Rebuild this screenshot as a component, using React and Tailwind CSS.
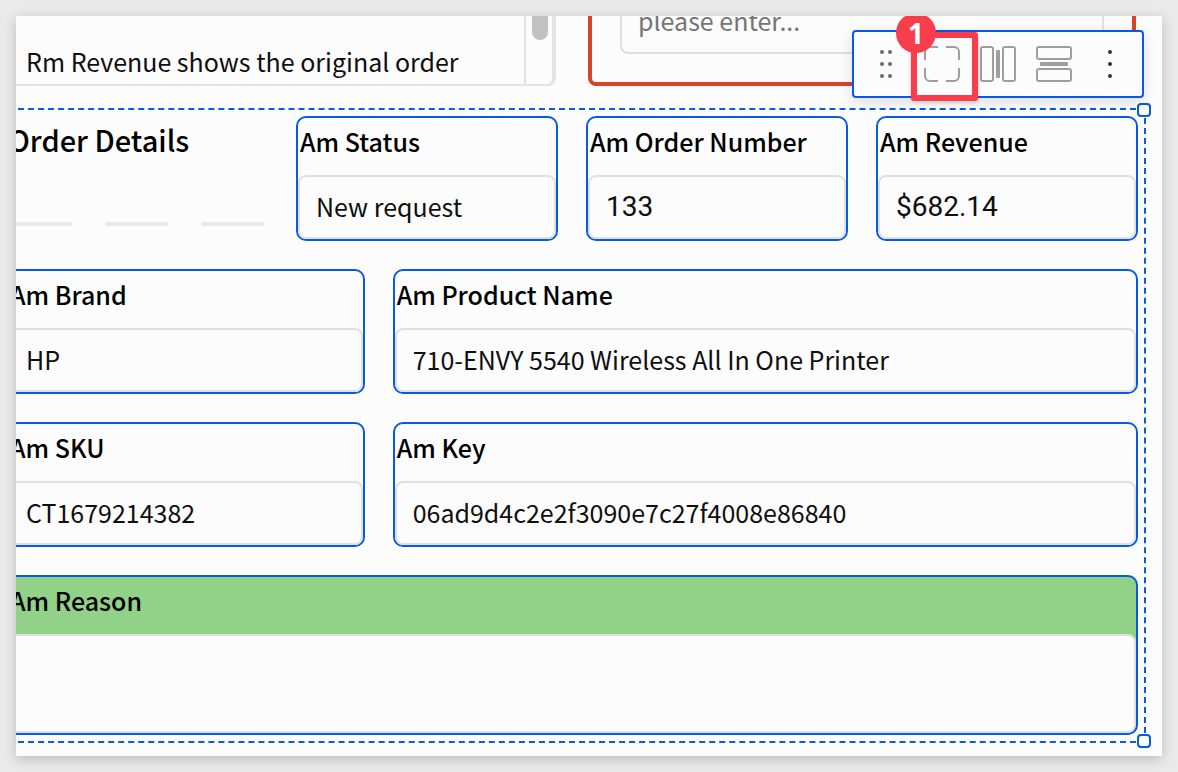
import { useId } from "react";

const sans = "font-['Noto_Sans_CJK_SC','Noto_Sans',sans-serif]";

function Field({ label, value, className, numeric = false }) {
  const id = useId();
  return (
    <div className={`flex min-w-0 flex-col rounded-[10px] border-2 border-[#055be5] ${className}`}>
      <label htmlFor={id} className="h-[57px] truncate pl-0.5 text-[25px] leading-[46px] font-medium text-black">
        {label}
      </label>
      <input
        id={id}
        defaultValue={value}
        className={`h-16 w-full min-w-0 rounded-lg border-2 border-[#e0e0e0] bg-[#fcfcfc] px-4 pb-0.5 outline-none ${
          numeric ? "font-[Roboto,sans-serif] text-[28px]" : "text-[25px]"
        }`}
      />
    </div>
  );
}

function ReasonField() {
  const id = useId();
  return (
    <div className="col-span-12 flex flex-col overflow-hidden rounded-[10px] border-2 border-[#055be5] bg-[#91d188]">
      <label htmlFor={id} className="h-[57px] pl-0.5 text-[25px] leading-[46px] font-medium text-black">
        Am Reason
      </label>
      <textarea
        id={id}
        className="block h-[99px] w-full resize-none rounded-lg border-2 border-[#e0e0e0] bg-[#fcfcfc] px-4 text-[25px] outline-none"
      />
    </div>
  );
}

function Handle({ className }) {
  return <span className={`absolute size-3.5 rounded border-2 border-[#055be5] bg-[#fcfcfc] ${className}`} />;
}

function ToolButton({ label, color, children }) {
  return (
    <button type="button" aria-label={label} className={`flex h-16 w-14 items-center justify-center ${color}`}>
      <svg viewBox="0 0 36 36" className="size-9" fill="none" stroke="currentColor" strokeWidth="2">
        {children}
      </svg>
    </button>
  );
}

function Toolbar() {
  return (
    <div
      role="toolbar"
      aria-label="Container tools"
      className="absolute top-3.5 right-[18px] flex rounded border-2 border-[#055be5] bg-[#fcfcfc] px-1 shadow-[0_4px_14px_rgba(0,0,0,0.13)]"
    >
      <ToolButton label="Move" color="text-[#6b6b6b]">
        <g fill="currentColor" stroke="none">
          <circle cx="14" cy="6" r="2" />
          <circle cx="22" cy="6" r="2" />
          <circle cx="14" cy="18" r="2" />
          <circle cx="22" cy="18" r="2" />
          <circle cx="14" cy="30" r="2" />
          <circle cx="22" cy="30" r="2" />
        </g>
      </ToolButton>
      <ToolButton label="Expand" color="text-[#9e9e9e]">
        <path d="M1 14V6a5 5 0 0 1 5-5h8M22 1h8a5 5 0 0 1 5 5v8M35 22v8a5 5 0 0 1-5 5h-8M14 35H6a5 5 0 0 1-5-5v-8" />
      </ToolButton>
      <ToolButton label="Distribute columns" color="text-[#9e9e9e]">
        <rect x="1" y="1" width="12" height="34" rx="2" />
        <rect x="16" y="4" width="4" height="28" rx="1" fill="currentColor" stroke="none" />
        <rect x="23" y="1" width="12" height="34" rx="2" />
      </ToolButton>
      <ToolButton label="Distribute rows" color="text-[#9e9e9e]">
        <rect x="1" y="1" width="34" height="12" rx="2" />
        <rect x="4" y="16" width="28" height="4" rx="1" fill="currentColor" stroke="none" />
        <rect x="1" y="23" width="34" height="12" rx="2" />
      </ToolButton>
      <ToolButton label="More" color="text-[#333333]">
        <g fill="currentColor" stroke="none">
          <circle cx="18" cy="6" r="2" />
          <circle cx="18" cy="18" r="2" />
          <circle cx="18" cy="30" r="2" />
        </g>
      </ToolButton>
      <span className="pointer-events-none absolute top-0 left-[57px] h-[69px] w-[67px] rounded-[3px] border-[6px] border-[#f93d4b] shadow-[0_1px_4px_rgba(0,0,0,0.2)]" />
      <span className="absolute -top-[19px] left-[42px] flex size-10 items-center justify-center rounded-full bg-[#f93d4b] font-['Open_Sans',sans-serif] text-[28px] leading-none font-bold text-white">
        1
      </span>
    </div>
  );
}

export default function App() {
  return (
    <div className={`min-h-screen bg-[#eaeaea] p-4 text-[#0f0f0f] ${sans}`}>
      <main className="relative overflow-hidden bg-[#fcfcfc] pb-[13px] shadow-[0_3px_12px_rgba(0,0,0,0.2)]">
        <div className="mr-6 -ml-2.5 grid h-[70px] grid-cols-2 gap-8">
          <div className="flex overflow-hidden rounded-b-lg border-r-4 border-b-2 border-[#e3e3e3]">
            <p className="min-w-0 flex-1 truncate pt-5 pl-5 text-[25px] leading-[50px]">
              Rm Revenue shows the original order
            </p>
            <div className="w-7 border-l-2 border-[#e3e3e3] pl-1.5">
              <div className="h-6 w-4 rounded-b-full bg-[#c1c1c1]" />
            </div>
          </div>
          <div className="mr-0.5 rounded-b-lg border-4 border-t-0 border-[#d8432b] px-7">
            <input
              aria-label="Comment"
              placeholder="please enter..."
              className="block h-[38px] w-full rounded-b-lg border-2 border-t-0 border-[#e0e0e0] px-4 pb-7 text-[25px] leading-9 outline-none placeholder:text-[#757575]"
            />
          </div>
        </div>

        <section className="relative mt-[22px] mr-4 -ml-[18px] border-2 border-dashed border-[#055be5] p-1.5">
          <div className="grid grid-cols-12 gap-7">
            <div className="col-span-3 flex flex-col pr-[3px] pl-0.5">
              <h2 className="text-[29px] leading-[46px] font-medium text-black">Order Details</h2>
              <div className="mt-[60px] flex justify-between">
                <span className="h-1 w-16 rounded-sm bg-[#e9e9e9]" />
                <span className="h-1 w-16 rounded-sm bg-[#e9e9e9]" />
                <span className="h-1 w-16 rounded-sm bg-[#e9e9e9]" />
              </div>
            </div>
            <Field label="Am Status" value="New request" className="col-span-3" />
            <Field label="Am Order Number" value="133" className="col-span-3" numeric />
            <Field label="Am Revenue" value="$682.14" className="col-span-3" numeric />
            <Field label="Am Brand" value="HP" className="col-span-4" />
            <Field label="Am Product Name" value="710-ENVY 5540 Wireless All In One Printer" className="col-span-8" />
            <Field label="Am SKU" value="CT1679214382" className="col-span-4" />
            <Field label="Am Key" value="06ad9d4c2e2f3090e7c27f4008e86840" className="col-span-8" />
            <ReasonField />
          </div>
          <Handle className="-top-[7px] -right-[7px]" />
          <Handle className="-right-[7px] -bottom-[7px]" />
        </section>

        <Toolbar />
      </main>
    </div>
  );
}
